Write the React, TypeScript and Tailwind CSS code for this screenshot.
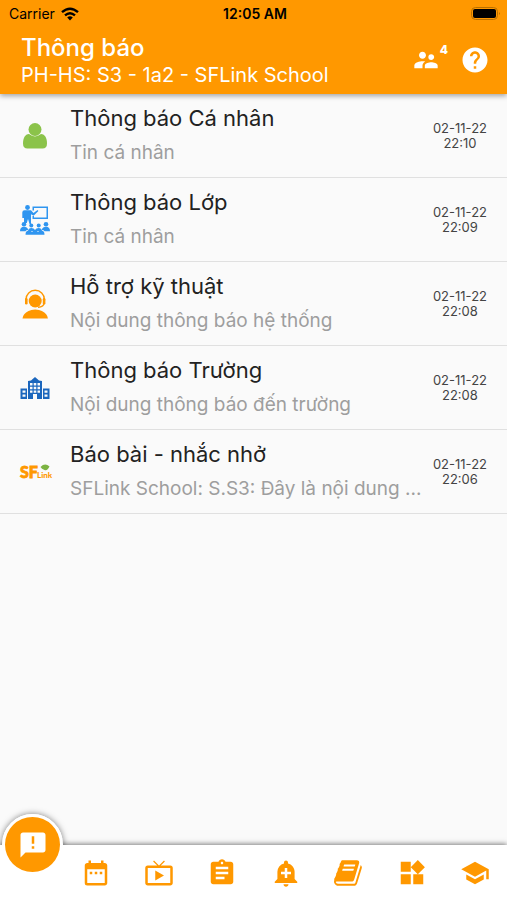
import type { ReactNode } from "react";
import {
  MdAddAlert,
  MdAnnouncement,
  MdAssignment,
  MdDateRange,
  MdHelp,
  MdLiveTv,
  MdSchool,
  MdSupervisorAccount,
  MdWidgets,
} from "react-icons/md";

type Notice = {
  title: string;
  text: string;
  date: string;
  time: string;
  icon: ReactNode;
};

const PersonIcon = () => (
  <svg viewBox="0 0 30 30" className="size-[30px] fill-[#8bc34a]">
    <circle cx="15" cy="8.5" r="6.5" />
    <path d="M9 13.1q6 4.8 12 0c4 .3 6 4 6 9.4q0 5-4.5 5h-15Q3 27.5 3 22.5c0-5.4 2-9.100 6-9.4z" />
  </svg>
);

const ClassIcon = () => (
  <svg viewBox="0 0 30 30" className="size-[30px] fill-[#2f95f0]">
    <circle cx="7.5" cy="2.5" r="2.4" />
    <path d="M4.5 5.3H11L13.5 8l4-3 .9 1-4.800 4.800L11 9.300V19H9.500L8 14l-1.200 4H4v-5H2.300V7.500q0-2.200 2.200-2.200z" />
    <path d="M12.500 1.500H28V14H12.500v-3H14v1.500h12.500V3H14v2.500h-1.500z" />
    <circle cx="4" cy="19.300" r="2.300" />
    <circle cx="11.300" cy="20.600" r="2" />
    <circle cx="18.700" cy="20.600" r="2" />
    <circle cx="26" cy="19.300" r="2.300" />
    <path d="M0 26.300q0-4.500 4-4.500 3.300 0 4.300 3-2.300 0-2.800 1.500zM30 26.300q0-4.500-4-4.500-3.300 0-4.300 3 2.300 0 2.800 1.500z" />
    <path d="M8 26q.5-3 3.300-3 2.700 0 3.700 2 1-2 3.700-2 2.800 0 3.300 3z" />
    <path d="M5.500 29.700q0-4.200 3.500-4.200 2.500 0 3 1.500.5-1.500 3-1.500t3 1.500q.5-1.500 3-1.500 3.500 0 3.500 4.200z" />
  </svg>
);

const SupportIcon = () => (
  <svg viewBox="0 0 30 30" className="size-[30px] fill-[#ff9800]">
    <path
      d="M6 12v-1.500a9.200 9.200 0 0 1 18.400 0V12M24 14q0 3.800-6 4.300"
      fill="none"
      stroke="#ff9800"
      strokeWidth="1.400"
    />
    <rect x="5" y="9" width="2.600" height="6.500" rx="1.300" />
    <rect x="22.800" y="9" width="2.600" height="6.500" rx="1.300" />
    <circle cx="15.200" cy="12" r="6.500" />
    <path d="M2.500 29.500q.5-5 6-7.500 2.500-1.500 6.700-1.500t6.700 1.500q5.500 2.500 6 7.500z" />
  </svg>
);

const SchoolIcon = () => (
  <svg viewBox="0 0 30 30" className="size-[30px] fill-[#1b66bd]">
    <path
      fillRule="evenodd"
      d="M8 26V8l3-.5 4-3.500 4 3.500 3 .5v18h-5v-5h-4v5zm2-16v2.500h2.500V10zm3.700 0v2.500h2.600V10zm3.800 0v2.500H20V10zM10 13.800v2.500h2.500v-2.500zm3.700 0v2.500h2.600v-2.500zm3.800 0v2.500H20v-2.500zM10 17.600v2.200h2.500v-2.200zm3.700 0v2.200h2.600v-2.200zm3.800 0v2.200H20v-2.200z"
    />
    <path
      fillRule="evenodd"
      d="M.5 15.500H7V26H.5zm2 2v2.300h3v-2.300zm0 4v2.300h3v-2.300zM23 15.500h6.500V26H23zm1.500 2v2.300h3v-2.300zm0 4v2.300h3v-2.300z"
    />
  </svg>
);

const LogoIcon = () => (
  <svg viewBox="0 0 30 30" className="size-[30px] overflow-visible fill-[#ff9800]">
    <text x="0" y="21" fontSize="16" fontWeight="900" fontFamily="Lato, sans-serif" stroke="#ff9800" strokeWidth=".8">
      SF
    </text>
    <text x="17" y="21" fontSize="8" fontWeight="900" fontFamily="Lato, sans-serif">
      Link
    </text>
    <path d="M20.500 10q4.500-4.500 9-.5-2 4.500-5 3.500t-4-3z" fill="#7cb342" />
  </svg>
);

const BookIcon = () => (
  <svg viewBox="0 0 1792 1792" className="size-[30px] fill-current">
    <path d="M1639 478q40 57 18 129l-275 906q-19 64-76.5 107.5t-122.5 43.5h-923q-77 0-148.5-53.5t-99.5-131.5q-24-67-2-127 0-4 3-27t4-37q1-8-3-21.5t-3-19.5q2-11 8-21t16.5-23.5 16.5-23.5q23-38 45-91.5t30-91.5q3-10 .5-30t-.5-28q3-11 17-28t17-23q21-36 42-92t25-90q1-9-2.500-32t.5-28q4-13 22-30.5t22-22.5q19-26 42.5-84.5t27.5-96.5q1-8-3-25.5t-2-26.5q2-8 9-18t18-23 17-21q8-12 16.5-30.5t15-35 16-36 19.5-32 26.5-23.5 36-11.5 47.5 5.500l-1 3q38-9 51-9h761q74 0 114 56t18 130l-274 906q-36 119-71.5 153.5t-128.5 34.5h-869q-27 0-38 15-11 16-1 43 24 70 144 70h923q29 0 56-15.5t35-41.5l300-987q7-22 5-57 38 15 59 43zm-1064 2q-4 13 2 22.5t20 9.500h608q13 0 25.5-9.500t16.5-22.5l21-64q4-13-2-22.5t-20-9.500h-608q-13 0-25.5 9.500t-16.5 22.5zm-83 256q-4 13 2 22.5t20 9.500h608q13 0 25.5-9.500t16.5-22.5l21-64q4-13-2-22.5t-20-9.500h-608q-13 0-25.5 9.500t-16.5 22.5z" />
  </svg>
);

const WifiIcon = () => (
  <svg viewBox="0 0 18 14" className="h-[14px] w-[18px]" fill="none" stroke="black" strokeWidth="2.400">
    <path d="M1 5.200q8-7 16 0M4 8.400q5-4.400 10 0" />
    <path d="M6.200 10.500q2.800-2.400 5.600 0L9 13.500z" fill="black" stroke="none" />
  </svg>
);

const BatteryIcon = () => (
  <svg viewBox="0 0 30 14" className="h-[14px] w-[30px]">
    <rect x=".5" y=".5" width="26" height="12" rx="4" fill="none" stroke="#b87000" />
    <rect x="2" y="2" width="23" height="9" rx="2" />
    <path d="M28 5q1.800 1.500 0 3z" fill="#a86500" />
  </svg>
);

const notices: Notice[] = [
  { title: "Thông báo Cá nhân", text: "Tin cá nhân", date: "02-11-22", time: "22:10", icon: <PersonIcon /> },
  { title: "Thông báo Lớp", text: "Tin cá nhân", date: "02-11-22", time: "22:09", icon: <ClassIcon /> },
  { title: "Hỗ trợ kỹ thuật", text: "Nội dung thông báo hệ thống", date: "02-11-22", time: "22:08", icon: <SupportIcon /> },
  { title: "Thông báo Trường", text: "Nội dung thông báo đến trường", date: "02-11-22", time: "22:08", icon: <SchoolIcon /> },
  {
    title: "Báo bài - nhắc nhở",
    text: "SFLink School: S.S3: Đây là nội dung ...",
    date: "02-11-22",
    time: "22:06",
    icon: <LogoIcon />,
  },
];

const tabs = [
  { label: "Lịch", icon: <MdDateRange className="size-[30px]" /> },
  { label: "Video", icon: <MdLiveTv className="size-[30px]" /> },
  { label: "Bài tập", icon: <MdAssignment className="size-[30px]" /> },
  { label: "Nhắc nhở", icon: <MdAddAlert className="size-[30px]" /> },
  { label: "Sổ liên lạc", icon: <BookIcon /> },
  { label: "Tiện ích", icon: <MdWidgets className="size-[30px]" /> },
  { label: "Học tập", icon: <MdSchool className="size-[30px]" /> },
];

const Header = () => (
  <header className="relative bg-[#ff9800] pb-[7px] shadow-[0_2px_5px_rgba(0,0,0,0.35)]">
    <div className="grid h-7 grid-cols-3 items-center pr-1.5 pl-[9px] text-sm text-black">
      <div className="flex items-center gap-1.5">
        <span>Carrier</span>
        <WifiIcon />
      </div>
      <span className="text-center font-semibold">12:05 AM</span>
      <div className="flex justify-end">
        <BatteryIcon />
      </div>
    </div>
    <div className="flex items-center justify-between pr-[17px] pl-[21px] text-white">
      <div className="pt-[5px]">
        <h1 className="text-2xl leading-[30px] font-medium">Thông báo</h1>
        <p className="text-xl leading-6">PH-HS: S3 - 1a2 - SFLink School</p>
      </div>
      <div className="flex items-center gap-3 pt-[5px]">
        <button type="button" aria-label="Tài khoản" className="flex">
          <MdSupervisorAccount className="size-7" />
          <span className="-mt-1 text-xs font-extrabold">4</span>
        </button>
        <button type="button" aria-label="Trợ giúp">
          <MdHelp className="size-[30px]" />
        </button>
      </div>
    </div>
  </header>
);

const NoticeRow = ({ notice }: { notice: Notice }) => (
  <li className="flex h-[84px] items-center border-b border-[#e0e0e0] px-5">
    <div className="w-[50px] shrink-0">{notice.icon}</div>
    <div className="min-w-0 flex-1">
      <h2 className="truncate text-[22px] leading-[34px] text-[#222222]">{notice.title}</h2>
      <p className="truncate text-[19px] leading-[35px] text-[#9e9e9e]">{notice.text}</p>
    </div>
    <div className="ml-1 shrink-0 text-center text-[13px] leading-[15px] text-[#444444]">
      <p>{notice.date}</p>
      <p>{notice.time}</p>
    </div>
  </li>
);

const BottomNav = () => (
  <nav className="relative h-[55px]">
    <div className="absolute -top-[31px] left-[2px] size-[61px] rounded-full bg-white shadow-[0_0_6px_rgba(0,0,0,0.5)]" />
    <div className="absolute inset-0 bg-white shadow-[0_-1px_5px_rgba(0,0,0,0.5)]" />
    <div className="absolute -top-[31px] left-[2px] size-[61px] rounded-full bg-white" />
    <div className="relative grid h-full grid-cols-8 items-center justify-items-center pl-px text-[#ff9800]">
      <button
        type="button"
        aria-label="Thông báo"
        className="relative -top-[28px] flex size-[55px] items-center justify-center rounded-full bg-[#ff9800] text-white"
      >
        <MdAnnouncement className="size-[30px]" />
      </button>
      {tabs.map((tab) => (
        <button key={tab.label} type="button" aria-label={tab.label}>
          {tab.icon}
        </button>
      ))}
    </div>
  </nav>
);

export default function App() {
  return (
    <div className="flex min-h-screen flex-col bg-[#fafafa] font-[Inter,sans-serif]">
      <Header />
      <main className="flex-1">
        <ul>
          {notices.map((notice) => (
            <NoticeRow key={notice.title} notice={notice} />
          ))}
        </ul>
      </main>
      <BottomNav />
    </div>
  );
}
